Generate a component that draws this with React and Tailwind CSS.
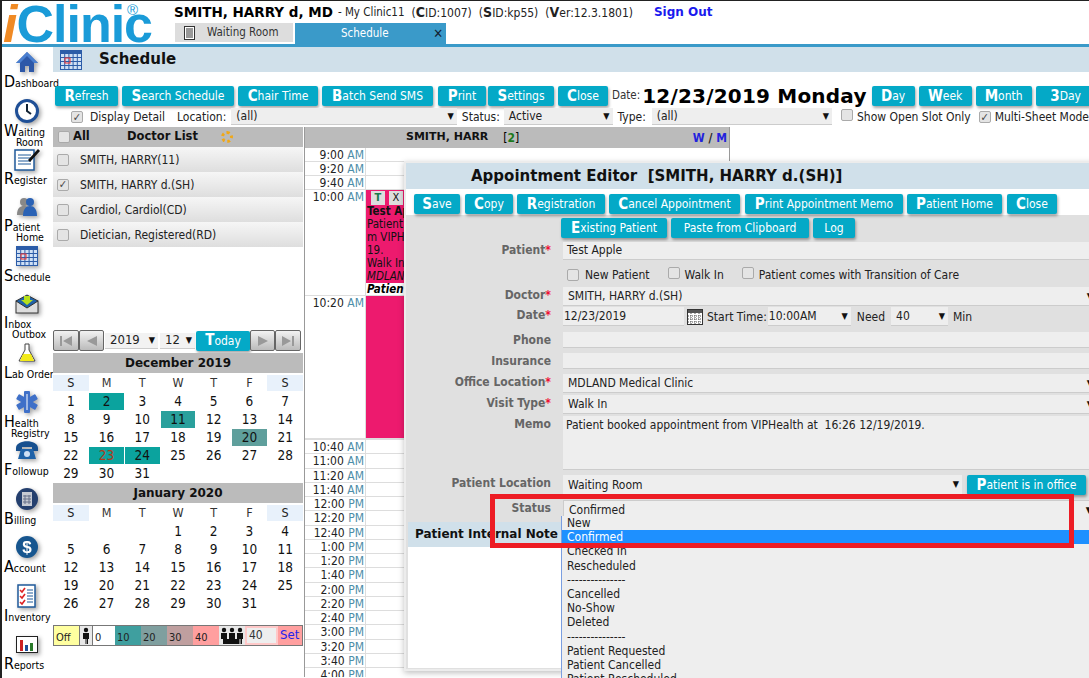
import React from "react";

const Btn = ({ w, a, b, h = "h-[20px]" }) => (
  <div className={`${w} ${h} shrink-0 flex items-center justify-center whitespace-nowrap rounded-[2px] bg-[#04a9c7] text-white text-[12px] shadow-[1px_2px_3px_rgba(0,0,0,0.35)]`}>
    <span className="font-bold text-[15px] leading-[15px]">{a}</span>
    <span>{b}</span>
  </div>
);

const Check = ({ on }) => (
  <span className="inline-flex shrink-0 items-center justify-center w-[12px] h-[12px] rounded-[2px] border border-[#aaa] bg-[#e4e4e4] text-[#444] text-[11px] leading-[11px] font-bold">
    {on ? "✓" : ""}
  </span>
);

const Arrow = () => <span className="text-[9px] text-[#111] leading-none">▼</span>;

const Sel = ({ w, v, cls = "" }) => (
  <div className={`${w} h-full flex items-center justify-between pl-[5px] pr-[3px] bg-[#eee] border-b border-[#ccc] text-[12px] text-[#222] whitespace-nowrap ${cls}`}>
    <span>{v}</span>
    <Arrow />
  </div>
);

const Ico = {
  home: (
    <svg width="24" height="22" viewBox="0 0 24 22"><path d="M12 1 1 12h4v9h5v-6h4v6h5v-9h4z" fill="#2d58a8" /><path d="M12 1 1 12h4l7-7 7 7h4z" fill="#4a7fd0" /></svg>
  ),
  clock: (
    <svg width="24" height="24" viewBox="0 0 24 24"><circle cx="12" cy="12" r="10.5" fill="#fff" stroke="#1f4f96" strokeWidth="3" /><path d="M12 5v7l4 3" fill="none" stroke="#123" strokeWidth="2" /></svg>
  ),
  reg: (
    <svg width="28" height="24" viewBox="0 0 28 24"><rect x="2" y="3" width="19" height="20" fill="#fff" stroke="#1f5a9a" strokeWidth="1.5" /><path d="M5 8h13M5 11h13M5 14h13M5 17h13" stroke="#1f5a9a" /><path d="M15 13 25 2l2 2-10 11z" fill="#111" /></svg>
  ),
  patient: (
    <svg width="26" height="22" viewBox="0 0 26 22"><circle cx="10" cy="6" r="4" fill="#888" /><path d="M3 19c0-7 3-9 7-9s7 2 7 9z" fill="#888" /><circle cx="16" cy="6" r="4" fill="#2a62b5" /><path d="M9 20c0-7 3-10 7-10s7 3 7 10z" fill="#2a62b5" /></svg>
  ),
  sched: (
    <svg width="22" height="20" viewBox="0 0 22 20"><rect width="22" height="20" fill="#2c5ca8" /><g fill="#cfe0f5">{[0, 1, 2, 3].map((r) => [0, 1, 2, 3, 4].map((c) => <rect key={r + "-" + c} x={1 + c * 4.2} y={4 + r * 4} width="3.2" height="3" />))}</g><rect x="5" y="8" width="5" height="5" fill="none" stroke="#e33" /></svg>
  ),
  inbox: (
    <svg width="24" height="20" viewBox="0 0 24 20"><rect x="1" y="7" width="22" height="12" fill="#ddd" stroke="#333" /><path d="M1 7 12 1l11 6-11 7z" fill="#1f62a8" stroke="#333" /><path d="M9 2h6v4h3l-6 5-6-5h3z" fill="#b6e01c" /></svg>
  ),
  lab: (
    <svg width="20" height="20" viewBox="0 0 20 20"><path d="M8 1h4v6l6 11H2L8 7z" fill="#fff" stroke="#444" /><path d="M6 11h8l3 7H3z" fill="#f2ea1a" /></svg>
  ),
  health: (
    <svg width="24" height="24" viewBox="0 0 24 24"><g fill="#3f70c8"><rect x="9" y="1" width="6" height="22" rx="1" /><rect x="9" y="1" width="6" height="22" rx="1" transform="rotate(60 12 12)" /><rect x="9" y="1" width="6" height="22" rx="1" transform="rotate(120 12 12)" /></g><path d="M12 4v16" stroke="#fff" /></svg>
  ),
  phone: (
    <svg width="24" height="20" viewBox="0 0 24 20"><path d="M1 8c0-9 22-9 22 0v3h-6V7H7v4H1z" fill="#17508f" /><path d="M6 9h12l3 10H3z" fill="#1f62a8" /><circle cx="12" cy="14" r="3" fill="#cfe0f5" /></svg>
  ),
  bill: (
    <svg width="24" height="24" viewBox="0 0 24 24"><circle cx="12" cy="12" r="11" fill="#243f6e" /><rect x="7" y="5" width="10" height="14" fill="#c5c9d2" /><path d="M8 9h8M8 12h8M8 15h8M10 8v9M14 8v9" stroke="#67708a" /></svg>
  ),
  acct: (
    <svg width="24" height="24" viewBox="0 0 24 24"><circle cx="12" cy="12" r="11" fill="#17568f" /><text x="12" y="18" textAnchor="middle" fontSize="17" fontWeight="700" fill="#fff" fontFamily="Liberation Sans">$</text></svg>
  ),
  inv: (
    <svg width="20" height="24" viewBox="0 0 20 24"><rect x="1" y="1" width="17" height="22" fill="#fff" stroke="#1f5a9a" strokeWidth="1.5" /><path d="M3 6l2 2 3-4M3 12l2 2 3-4M3 18l2 2 3-4" fill="none" stroke="#d22" strokeWidth="1.6" /><path d="M10 6h6M10 12h6M10 18h6M10 9h6M10 15h6" stroke="#1f5a9a" /></svg>
  ),
  rep: (
    <svg width="22" height="17" viewBox="0 0 22 17"><rect x="0.5" y="0.5" width="21" height="16" fill="#fff" stroke="#222" /><rect x="4" y="4" width="3" height="11" fill="#c22" /><rect x="9" y="9" width="3" height="6" fill="#1f4f96" /><rect x="14" y="7" width="3" height="8" fill="#2a7a2a" /></svg>
  ),
  gear: (
    <svg width="20" height="20" viewBox="0 0 20 20"><circle cx="10" cy="10" r="7" fill="#fff" stroke="#333" strokeWidth="2" strokeDasharray="3 1.5" /></svg>
  ),
};

const SideItem = ({ icon, a, b, c, top = "mt-[2px]", lineCls = "", cCls = "ml-[14px]" }) => (
  <div className="h-[48.5px] w-[50px] shrink-0 flex flex-col overflow-visible text-black">
    <div className={`${top} h-[24px] flex items-center justify-center drop-shadow-[2px_2px_2px_rgba(0,0,0,0.35)]`}>{icon}</div>
    <div className={`flex items-end leading-none whitespace-nowrap ml-[2px] ${lineCls}`}>
      <span className="text-[16px] leading-[15px]">{a}</span>
      <span className="text-[10.5px] leading-[11px]">{b}</span>
    </div>
    {c ? <div className={`text-[10.5px] leading-[9px] ${cCls}`}>{c}</div> : null}
  </div>
);

const Sidebar = () => (
  <div className="w-[51px] shrink-0 flex flex-col pt-[1px]">
    <SideItem icon={Ico.home} a="D" b="ashboard" />
    <SideItem icon={Ico.clock} a="W" b="aiting" c="Room" />
    <SideItem icon={Ico.reg} a="R" b="egister" />
    <SideItem icon={Ico.patient} a="P" b="atient" c="Home" />
    <SideItem icon={Ico.sched} a="S" b="chedule" />
    <SideItem icon={Ico.inbox} a="I" b="nbox" c="Outbox" cCls="ml-[10px]" />
    <SideItem icon={Ico.lab} a="L" b="ab Order" />
    <SideItem icon={Ico.health} a="H" b="ealth" c="Registry" cCls="ml-[9px]" />
    <SideItem icon={Ico.phone} a="F" b="ollowup" />
    <SideItem icon={Ico.bill} a="B" b="illing" />
    <SideItem icon={Ico.acct} a="A" b=" ccount" />
    <SideItem icon={Ico.inv} a="I" b="nventory" />
    <SideItem icon={Ico.rep} a="R" b="eports" />
    <SideItem icon={Ico.gear} a="" b="" />
  </div>
);

const Month = ({ title, cells, marks = {} }) => (
  <div className="w-[250px]">
    <div className="h-[20px] bg-[#bbb] flex items-center justify-center text-[12px] font-bold font-['DejaVu_Sans'] text-[#111]">{title}</div>
    <div className="grid grid-cols-7 mt-[2px] h-[16px] text-[12.5px] text-center leading-[15px]">
      {["S", "M", "T", "W", "T", "F", "S"].map((d, i) => (
        <div key={i} className={i === 0 || i === 6 ? "bg-[#e8f1fb] text-[#222]" : "text-[#333]"}>{d}</div>
      ))}
    </div>
    <div className="grid grid-cols-7 auto-rows-[18px] mt-[1px] text-[13.5px] text-center text-[#111]">
      {cells.map((c, i) => (
        <div key={i} className={`mx-[0.5px] my-[0.5px] leading-[17px] ${marks[c] || ""}`}>{c}</div>
      ))}
    </div>
  </div>
);

const dec = [...Array(31)].map((_, i) => i + 1);
const jan = ["", "", "", ...Array.from({ length: 31 }, (_, i) => i + 1)];

const NavBtn = ({ d, wide }) => (
  <div className={`${wide} h-[21px] shrink-0 flex items-center justify-center border border-[#666] rounded-[2px] bg-gradient-to-b from-[#f2f2f2] to-[#bbb]`}>
    <svg width="14" height="12" viewBox="0 0 14 12"><path d={d} fill="#999" /></svg>
  </div>
);

const Legend = ({ w, bg, t }) => (
  <div className={`${w} h-full ${bg} shrink-0 flex items-end pl-[2px] text-[11px] leading-[14px] text-[#222]`}>{t}</div>
);

const Person = ({ n }) => (
  <svg width={n * 8} height="17" viewBox={`0 0 ${n * 8} 17`}>
    {[...Array(n)].map((_, i) => (
      <g key={i} fill="#111">
        <circle cx={4 + i * 8} cy="3" r="2.2" />
        <path d={`M${1 + i * 8} 6h6v6h-1v5h-1.5v-5h-1v5H3v-5H${1 + i * 8}z`} />
      </g>
    ))}
  </svg>
);

const LeftCol = () => (
  <div className="w-[250px] shrink-0 flex flex-col">
    <div className="h-[20px] bg-[#bbb] flex items-center pl-[5px] text-[11.5px] font-bold font-['DejaVu_Sans'] text-[#111]">
      <Check />
      <span className="ml-[3px] w-[54px]">All</span>
      <span>Doctor List</span>
      <span className="ml-[23px] w-[12px] h-[12px] rounded-full border-[3px] border-dotted border-[#f0a818]" />
    </div>
    {["SMITH, HARRY(11)", "SMITH, HARRY d.(SH)", "Cardiol, Cardiol(CD)", "Dietician, Registered(RD)"].map((n, i) => (
      <div key={n} className="h-[25px] flex items-center pl-[4px] gap-[11px] bg-gradient-to-b from-[#f6f6f6] to-[#dedede] text-[12px] text-[#222]">
        <Check on={i === 1} />
        <span>{n}</span>
      </div>
    ))}
    <div className="mt-[83px] h-[21px] flex items-center">
      <NavBtn wide="w-[26px]" d="M1 1h2v10H1zM13 1v10L4 6z" />
      <NavBtn wide="w-[25px]" d="M12 1v10L2 6z" />
      <div className="w-[53px] ml-[1px] h-[16px]"><Sel w="w-full" v="2019" cls="text-[13px] bg-[#f2f2f2]" /></div>
      <div className="w-[35px] ml-[2px] h-[16px]"><Sel w="w-full" v="12" cls="text-[13px] bg-[#f2f2f2]" /></div>
      <Btn w="w-[54px] ml-[1px]" a="T" b="oday" />
      <NavBtn wide="w-[25px]" d="M2 1v10l10-5z" />
      <NavBtn wide="w-[26px]" d="M1 1v10l9-5zM11 1h2v10h-2z" />
    </div>
    <div className="mt-[2px]">
      <Month title="December 2019" cells={dec} marks={{ 2: "bg-[#0ba39e]", 11: "bg-[#2aa09c]", 20: "bg-[#5f9f9c]", 23: "bg-[#0ba39e] text-[#b03a1a]", 24: "bg-[#0ba39e]" }} />
    </div>
    <div className="mt-[1px]">
      <Month title="January 2020" cells={jan} />
    </div>
    <div className="mt-[13px] h-[21px] w-[250px] flex items-stretch border border-[#777]">
      <Legend w="w-[25px]" bg="bg-[#ffffa0]" t="Off" />
      <div className="w-[14px] shrink-0 flex items-center justify-center bg-[#e8e8e8] border-x border-[#777]"><Person n={1} /></div>
      <Legend w="w-[22px]" bg="bg-white" t="0" />
      <Legend w="w-[26px]" bg="bg-[#3f9f9f]" t="10" />
      <Legend w="w-[26px]" bg="bg-[#7f9f9f]" t="20" />
      <Legend w="w-[26px]" bg="bg-[#bf9f9f]" t="30" />
      <Legend w="w-[26px]" bg="bg-[#ff9f9f]" t="40" />
      <div className="w-[26px] shrink-0 flex items-center justify-center bg-[#e8e8e8] overflow-hidden"><Person n={3} /></div>
      <div className="w-[33px] shrink-0 bg-[#eee] border-2 border-[#ffc8c8] text-[12px] leading-[15px] pl-[2px] text-[#333]">40</div>
      <div className="flex-1 bg-[#ff9f9f] text-[#2222ee] text-[13px] leading-[18px] pl-[2px]">Set</div>
    </div>
  </div>
);

const timeRows = [
  ["9:00", "AM", "h-[14px]"], ["9:20", "AM", "h-[14px]"], ["9:40", "AM", "h-[14px]"],
  ["10:00", "AM", "h-[106px]", 1], ["10:20", "AM", "h-[143px]", 2],
  ["", "", "h-[1px]"],
  ["10:40", "AM"], ["11:00", "AM"], ["11:20", "AM"], ["11:40", "AM"], ["12:00", "PM"], ["12:20", "PM"], ["12:40", "PM"],
  ["1:00", "PM"], ["1:20", "PM"], ["1:40", "PM"], ["2:00", "PM"], ["2:20", "PM"], ["2:40", "PM"], ["3:00", "PM"], ["3:20", "PM"], ["3:40", "PM"], ["4:00", "PM"],
];

const Appt = () => (
  <div className="h-full flex flex-col overflow-hidden text-[11.5px] leading-[13px] whitespace-nowrap text-[#111]">
    <div className="bg-[#ed1a6e] pl-[5px] pt-[1px] h-[20px] flex gap-[4px]">
      <span className="w-[14px] h-[14px] bg-[#ddd] text-center text-[#1a7a4a] font-bold text-[11px]">T</span>
      <span className="w-[14px] h-[14px] bg-[#ddd] text-center text-[11px]">X</span>
    </div>
    <div className="bg-[#ed1a6e] flex-1 pl-[1px]">
      <div className="font-bold">Test Apple</div>
      <div>Patient booked</div>
      <div>m VIPHealth at</div>
      <div>19.</div>
      <div>Walk In</div>
      <div className="italic">MDLAND</div>
    </div>
    <div className="bg-white h-[14px] pl-[1px] font-bold italic text-black">Patient is in</div>
  </div>
);

const Schedule = () => (
  <div className="w-[426px] shrink-0 ml-[1px] border-l border-[#999] border-r flex flex-col overflow-hidden">
    <div className="h-[21px] shrink-0 bg-[#bbb] flex items-center text-[11px] font-bold">
      <span className="ml-[101px] font-['DejaVu_Sans'] text-[#111]">SMITH, HARR</span>
      <span className="ml-[15px] font-normal text-[12px]">[<b className="text-[#1a7a1a]">2</b>]</span>
      <span className="ml-auto mr-[2px] text-[#2222dd] text-[12px]">W <span className="text-[#222]">/</span> M</span>
    </div>
    {timeRows.map(([t, ap, h, k], i) => (
      <div key={i} className={`${h || "h-[14.25px]"} shrink-0 flex border-b border-[#ddd]`}>
        <div className="w-[61px] shrink-0 border-r border-[#ddd] text-right pr-[1px] text-[12px] leading-[14px] text-[#222]">
          {t} <span className="text-[#4d8da8]">{ap}</span>
        </div>
        <div className="flex-1 min-w-0">
          {k === 1 ? <Appt /> : null}
          {k === 2 ? <div className="h-full bg-[#ed1a6e]" /> : null}
        </div>
      </div>
    ))}
  </div>
);

const Row = ({ mt, h, label, star, children, cls = "" }) => (
  <div className={`${mt} ${h} grid grid-cols-[157px_1fr] shrink-0`}>
    <div className={`text-right pr-[12px] text-[12px] font-bold leading-[16px] text-[#666] ${cls}`}>
      {label}
      {star ? <span className="text-[#ee1133]">*</span> : null}
    </div>
    <div className="min-w-0 flex">{children}</div>
  </div>
);

const Box = ({ children }) => (
  <div className="w-full h-full bg-[#eee] border-b border-[#ccc] pl-[4px] text-[12px] leading-[16px] text-[#222] whitespace-nowrap">{children}</div>
);

const statusOptions = ["Checked In", "Rescheduled", "---------------", "Cancelled", "No-Show", "Deleted", "---------------", "Patient Requested", "Patient Cancelled", "Patient Rescheduled"];

const Modal = () => (
  <div className="absolute left-[402px] top-[160px] w-[692px] h-[510px] z-10 flex flex-col border-2 border-[#ececec] border-r-0 bg-[#e0e0e0] shadow-[0_2px_6px_rgba(0,0,0,0.25)]">
    <div className="h-[26px] shrink-0 bg-[#d0e0ea] pl-[65px] text-[15px] font-bold font-['DejaVu_Sans'] leading-[26px] text-[#111] whitespace-pre">
      Appointment Editor  [SMITH, HARRY d.(SH)]
    </div>
    <div className="h-[26px] shrink-0 bg-white flex gap-[4px] pl-[8px] pt-[5px]">
      <Btn w="w-[46px]" a="S" b="ave" />
      <Btn w="w-[48px] ml-[1px]" a="C" b="opy" />
      <Btn w="w-[88px]" a="R" b="egistration" />
      <Btn w="w-[131px]" a="C" b="ancel Appointment" />
      <Btn w="w-[158px] ml-[1px]" a="P" b="rint Appointment Memo" />
      <Btn w="w-[95px]" a="P" b="atient Home" />
      <Btn w="w-[50px] ml-[1px]" a="C" b="lose" />
    </div>
    <div className="flex-1 flex flex-col min-h-0">
      <div className="mt-[3px] h-[20px] shrink-0 flex gap-[4px] pl-[155px]">
        <Btn w="w-[106px]" a="E" b="xisting Patient" />
        <Btn w="w-[138px]" a="" b="Paste from Clipboard" />
        <Btn w="w-[42px]" a="" b="Log" />
      </div>
      <Row mt="mt-[4px]" h="h-[18px]" label="Patient" star><Box>Test Apple</Box></Row>
      <Row mt="mt-[6px]" h="h-[16px]" label="">
        <div className="flex items-center text-[12px] text-[#222] pl-[4px] whitespace-nowrap">
          <Check /><span className="ml-[6px]">New Patient</span>
          <span className="ml-[18px]"><Check /></span><span className="ml-[5px]">Walk In</span>
          <span className="ml-[18px]"><Check /></span><span className="ml-[5px]">Patient comes with Transition of Care</span>
        </div>
      </Row>
      <Row mt="mt-[5px]" h="h-[16px]" label="Doctor" star><Sel w="w-full" v="SMITH, HARRY d.(SH)" /></Row>
      <Row mt="mt-[4px]" h="h-[17px]" label="Date" star>
        <div className="flex items-center w-full text-[12px] text-[#222] whitespace-nowrap">
          <div className="w-[121px] h-full bg-[#eee] border-b border-[#ccc] pl-[1px]">12/23/2019</div>
          <svg className="ml-[3px]" width="16" height="17" viewBox="0 0 16 17"><rect x="0.5" y="1.5" width="15" height="15" fill="#fff" stroke="#333" /><rect x="1" y="2" width="14" height="3" fill="#555" /><path d="M1 8h14M1 11h14M1 14h14M4 5v11M8 5v11M12 5v11" stroke="#555" strokeDasharray="1 1" /></svg>
          <span className="ml-[4px]">Start Time:</span>
          <div className="w-[83px] h-full ml-[1px]"><Sel w="w-full" v="10:00AM" cls="!pl-[1px]" /></div>
          <span className="ml-[6px]">Need</span>
          <div className="w-[57px] h-full ml-[6px]"><Sel w="w-full" v="40" /></div>
          <span className="ml-[5px]">Min</span>
        </div>
      </Row>
      <Row mt="mt-[8px]" h="h-[16px]" label="Phone"><Box /></Row>
      <Row mt="mt-[5px]" h="h-[16px]" label="Insurance"><Box /></Row>
      <Row mt="mt-[5px]" h="h-[16px]" label="Office Location" star><Sel w="w-full" v="MDLAND Medical Clinic" /></Row>
      <Row mt="mt-[5px]" h="h-[16px]" label="Visit Type" star><Sel w="w-full" v="Walk In" /></Row>
      <Row mt="mt-[5px]" h="h-[54px]" label="Memo">
        <div className="w-full h-full bg-[#eee] border-b border-[#ccc] pl-[3px] text-[12px] leading-[18px] text-[#222] whitespace-pre">Patient booked appointment from VIPHealth at  16:26 12/19/2019.</div>
      </Row>
      <Row mt="mt-[5px]" h="h-[17px]" label="Patient Location">
        <div className="w-[399px] h-full"><Sel w="w-full" v="Waiting Room" /></div>
        <Btn w="w-[119px] ml-[5px]" a="P" b="atient is in office" />
      </Row>
      <Row mt="mt-[8px]" h="h-[16px]" label="Status">
        <Sel w="w-full" v="Confirmed" cls="border border-[#7a9ee0]" />
      </Row>
      <div className="mt-[6px] ml-[2px] w-[155px] flex-1 mb-[1px] bg-white">
        <div className="h-[25px] bg-[#d0e0ea] pl-[7px] text-[12px] font-bold font-['DejaVu_Sans'] leading-[25px] text-[#111] whitespace-nowrap overflow-hidden">Patient Internal Note</div>
      </div>
    </div>
  </div>
);

const Dropdown = () => (
  <div className="absolute left-[559px] top-[515px] w-[540px] h-[170px] z-20 bg-[#eee] border-l border-[#7a9ee0] text-[12px] leading-[14.2px] text-[#222]">
    <div className="pl-[5px]">New</div>
    <div className="pl-[5px] bg-[#1e90ff] text-white">Confirmed</div>
    {statusOptions.map((o, i) => (
      <div key={i} className="pl-[5px] whitespace-nowrap">{o}</div>
    ))}
  </div>
);

export default function App() {
  return (
    <div className="relative w-[1089px] h-[678px] overflow-hidden bg-white border-l-2 border-t border-[#222] font-['DejaVu_Sans_Condensed','DejaVu_Sans',sans-serif]">
      <div className="h-[46px] flex border-b-[3px] border-[#3a9ac9] -ml-[2px]">
        <div className="w-[174px] shrink-0 relative font-['Liberation_Sans'] text-[52px] leading-[46px] font-bold tracking-[-1px] text-[#1a9bd8] whitespace-nowrap pl-[3px]">
          <span className="italic text-[#f08a24]">i</span>Clinic
          <span className="absolute left-[127px] top-[0px] text-[15px] leading-[18px] font-normal">®</span>
        </div>
        <div className="flex-1 flex flex-col">
          <div className="h-[23px] flex items-center whitespace-nowrap text-[#222] text-[12px]">
            <span className="font-bold font-['DejaVu_Sans'] text-[13.5px] text-black">SMITH, HARRY d, MD</span>
            <span className="ml-[5px] text-[11.5px]">- My Clinic11</span>
            <span className="ml-[7px]">(<b className="text-[14px]">C</b>ID:1007)</span>
            <span className="ml-[7px]">(<b className="text-[14px]">S</b>ID:kp55)</span>
            <span className="ml-[7px]">(<b className="text-[14px]">V</b>er:12.3.1801)</span>
            <span className="ml-[21px] font-bold font-['DejaVu_Sans'] text-[12px] text-[#1a1aee]">Sign Out</span>
          </div>
          <div className="flex h-[21px]">
            <div className="w-[118px] ml-[1px] mb-[2px] bg-[#ddd] flex items-center pl-[8px] gap-[11px] text-[11.5px] text-[#333]">
              <svg width="13" height="14" viewBox="0 0 13 14"><rect x="1.5" y="0.5" width="10" height="13" fill="#fff" stroke="#333" /><path d="M3 3h7M3 5h7M3 7h7M3 9h7M3 11h7" stroke="#333" /></svg>
              Waiting Room
            </div>
            <div className="w-[151px] ml-[2px] bg-[#3a9ac9] flex items-center text-[11.5px] text-white relative">
              <span className="ml-[46px]">Schedule</span>
              <span className="ml-auto mr-[3px] text-[#123] text-[13px] leading-none">✕</span>
            </div>
          </div>
        </div>
      </div>
      <div className="flex h-[630px]">
        <Sidebar />
        <div className="flex-1 min-w-0 flex flex-col">
          <div className="h-[25px] bg-[#d0e0ea] flex items-center pl-[7px] shrink-0">
            {Ico.sched}
            <span className="ml-[17px] text-[15px] font-bold font-['DejaVu_Sans'] text-[#111]">Schedule</span>
          </div>
          <div className="mt-[14px] h-[20px] shrink-0 flex items-center pl-[2px] gap-[4px] whitespace-nowrap">
            <Btn w="w-[63px]" a="R" b="efresh" />
            <Btn w="w-[112px]" a="S" b="earch Schedule" />
            <Btn w="w-[80px]" a="C" b="hair Time" />
            <Btn w="w-[111px]" a="B" b="atch Send SMS" />
            <Btn w="w-[48px] ml-[1px]" a="P" b="rint" />
            <Btn w="w-[66px] -ml-[2px]" a="S" b="ettings" />
            <Btn w="w-[50px]" a="C" b="lose" />
            <span className="text-[11.5px] text-[#333]">Date:</span>
            <span className="font-['DejaVu_Sans'] font-bold text-[20px] tracking-[0.2px] text-black -ml-[2px] mr-[1px]">12/23/2019 Monday</span>
            <Btn w="w-[43px]" a="D" b="ay" />
            <Btn w="w-[53px]" a="W" b="eek" />
            <Btn w="w-[56px]" a="M" b="onth" />
            <Btn w="w-[60px]" a="3" b=" Day" />
          </div>
          <div className="mt-[2px] h-[17px] shrink-0 flex items-center whitespace-nowrap text-[12px] text-[#222]">
            <span className="ml-[18px]"><Check on /></span>
            <span className="ml-[7px]">Display Detail</span>
            <span className="ml-[12px]">Location:</span>
            <div className="w-[249px] h-full ml-[5px]"><Sel w="w-full" v="(all)" /></div>
            <span className="ml-[5px]">Status:</span>
            <div className="w-[120px] h-full ml-[4px]"><Sel w="w-full" v="Active" /></div>
            <span className="ml-[5px]">Type:</span>
            <div className="w-[199px] h-full ml-[6px]"><Sel w="w-full" v="(all)" /></div>
            <span className="ml-[9px]"><Check /></span>
            <span className="ml-[4px]">Show Open Slot Only</span>
            <span className="ml-[8px]"><Check on /></span>
            <span className="ml-[4px]">Multi-Sheet Mode</span>
          </div>
          <div className="mt-[2px] flex flex-1 min-h-0">
            <LeftCol />
            <Schedule />
          </div>
        </div>
      </div>
      <Modal />
      <Dropdown />
      <div className="absolute left-[488px] top-[493px] w-[584px] h-[54px] z-30 border-[5px] border-[#ed1c24]" />
    </div>
  );
}
